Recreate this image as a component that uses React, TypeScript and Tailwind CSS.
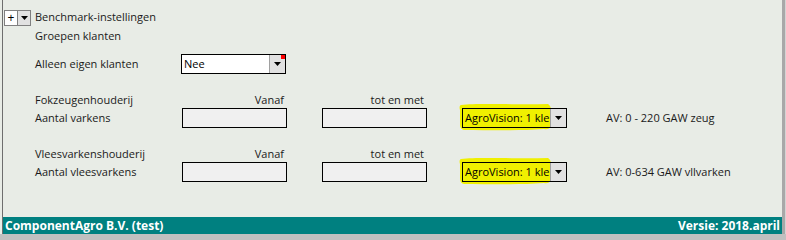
import React from "react";

const font = { fontFamily: '"Open Sans", "Noto Sans", sans-serif' };

function DropBtn({ className = "" }: { className?: string }) {
  return (
    <div className={"flex items-center justify-center bg-[#e1e1e1] border-l border-[#a0a0a0] " + className}>
      <svg width="7" height="4" viewBox="0 0 7 4"><path d="M0 0h7L3.5 4z" fill="#000" /></svg>
    </div>
  );
}

function Highlight() {
  return (
    <svg className="absolute left-[-4px] top-[-6px]" width="96" height="30" viewBox="0 0 96 30">
      <path
        d="M3 3 C20 1 60 3 90 2 C93 4 94 8 92 12 L92 22 C94 25 91 28 86 27 C60 29 30 28 6 28 C2 27 2 24 2 20 L2 8 C1 5 2 3 3 3z"
        fill="#f0f000"
      />
    </svg>
  );
}

function AgroSelect() {
  return (
    <div className="relative w-[105px] h-[20px]">
      <Highlight />
      <div className="absolute inset-0 flex border border-black">
        <div className="flex-1 overflow-hidden whitespace-nowrap pl-[2px] text-[11px] leading-[18px] text-black">
          AgroVision: 1 kle
        </div>
        <DropBtn className="w-[16px]" />
      </div>
    </div>
  );
}

function Input() {
  return <div className="w-[105px] h-[20px] border border-black bg-[#f0f0f0]" />;
}

function Group({ title, label, av }: { title: string; label: string; av: string }) {
  return (
    <div className="flex flex-col">
      <div className="flex h-[17px] items-center">
        <div className="w-[182px] pl-[35px] text-[11px] leading-[17px] whitespace-nowrap">{title}</div>
        <div className="w-[102px] text-right text-[11px] leading-[17px]">Vanaf</div>
        <div className="w-[38px]" />
        <div className="w-[102px] text-right text-[11px] leading-[17px]">tot en met</div>
      </div>
      <div className="flex h-[20px] items-center">
        <div className="w-[182px] pl-[35px] text-[11px] whitespace-nowrap">{label}</div>
        <Input />
        <div className="w-[35px]" />
        <Input />
        <div className="w-[35px]" />
        <AgroSelect />
        <div className="w-[39px]" />
        <div className="text-[11px] whitespace-nowrap">{av}</div>
      </div>
    </div>
  );
}

export default function App() {
  return (
    <div className="w-[786px] h-[240px] flex flex-col bg-[#c0c0c0] text-[#1a1a1a]" style={font}>
      <div className="flex h-[234px]">
        <div className="w-[2px] bg-[#e8ece6]" />
        <div className="w-[1px] bg-[#6e6e6e]" />
        <div className="flex-1 flex flex-col">
          <div className="flex-1 bg-[#e8ece6] flex flex-col pt-[9px]">
            <div className="flex items-center h-[17px]">
              <div className="ml-[1px] w-[13px] h-[16px] bg-white border border-[#808080] border-r-0 flex items-center justify-center text-[12px] leading-none text-black">+</div>
              <div className="w-[14px] h-[16px] border border-[#808080] bg-[#e1e1e1] flex items-center justify-center">
                <svg width="7" height="4" viewBox="0 0 7 4"><path d="M0 0h7L3.5 4z" fill="#000" /></svg>
              </div>
              <div className="ml-[4px] text-[11px] whitespace-nowrap">Benchmark-instellingen</div>
            </div>
            <div className="pl-[32px] mt-[1px] text-[11px] leading-[17px]">Groepen klanten</div>
            <div className="flex items-center mt-[10px] h-[20px]">
              <div className="w-[178px] pl-[32px] text-[11px] whitespace-nowrap">Alleen eigen klanten</div>
              <div className="relative w-[105px] h-[20px] flex border border-black bg-white">
                <div className="flex-1 pl-[2px] text-[11px] leading-[18px] text-black">Nee</div>
                <DropBtn className="w-[16px]" />
                <div className="absolute right-0 top-0 w-[4px] h-[4px] bg-[#ff0000]" />
              </div>
            </div>
            <div className="mt-[17px] -ml-[3px]">
              <Group title="Fokzeugenhouderij" label="Aantal varkens" av="AV: 0 - 220 GAW zeug" />
            </div>
            <div className="mt-[17px] -ml-[3px]">
              <Group title="Vleesvarkenshouderij" label="Aantal vleesvarkens" av="AV: 0-634 GAW vllvarken" />
            </div>
          </div>
          <div className="h-[17px] bg-[#008080] flex items-center justify-between px-[2px] text-white font-bold text-[12px]">
            <span>ComponentAgro B.V. (test)</span>
            <span>Versie: 2018.april</span>
          </div>
        </div>
        <div className="w-[3px] bg-[#a8a8a8]" />
        <div className="w-[1px] bg-[#d4d4d4]" />
      </div>
    </div>
  );
}
